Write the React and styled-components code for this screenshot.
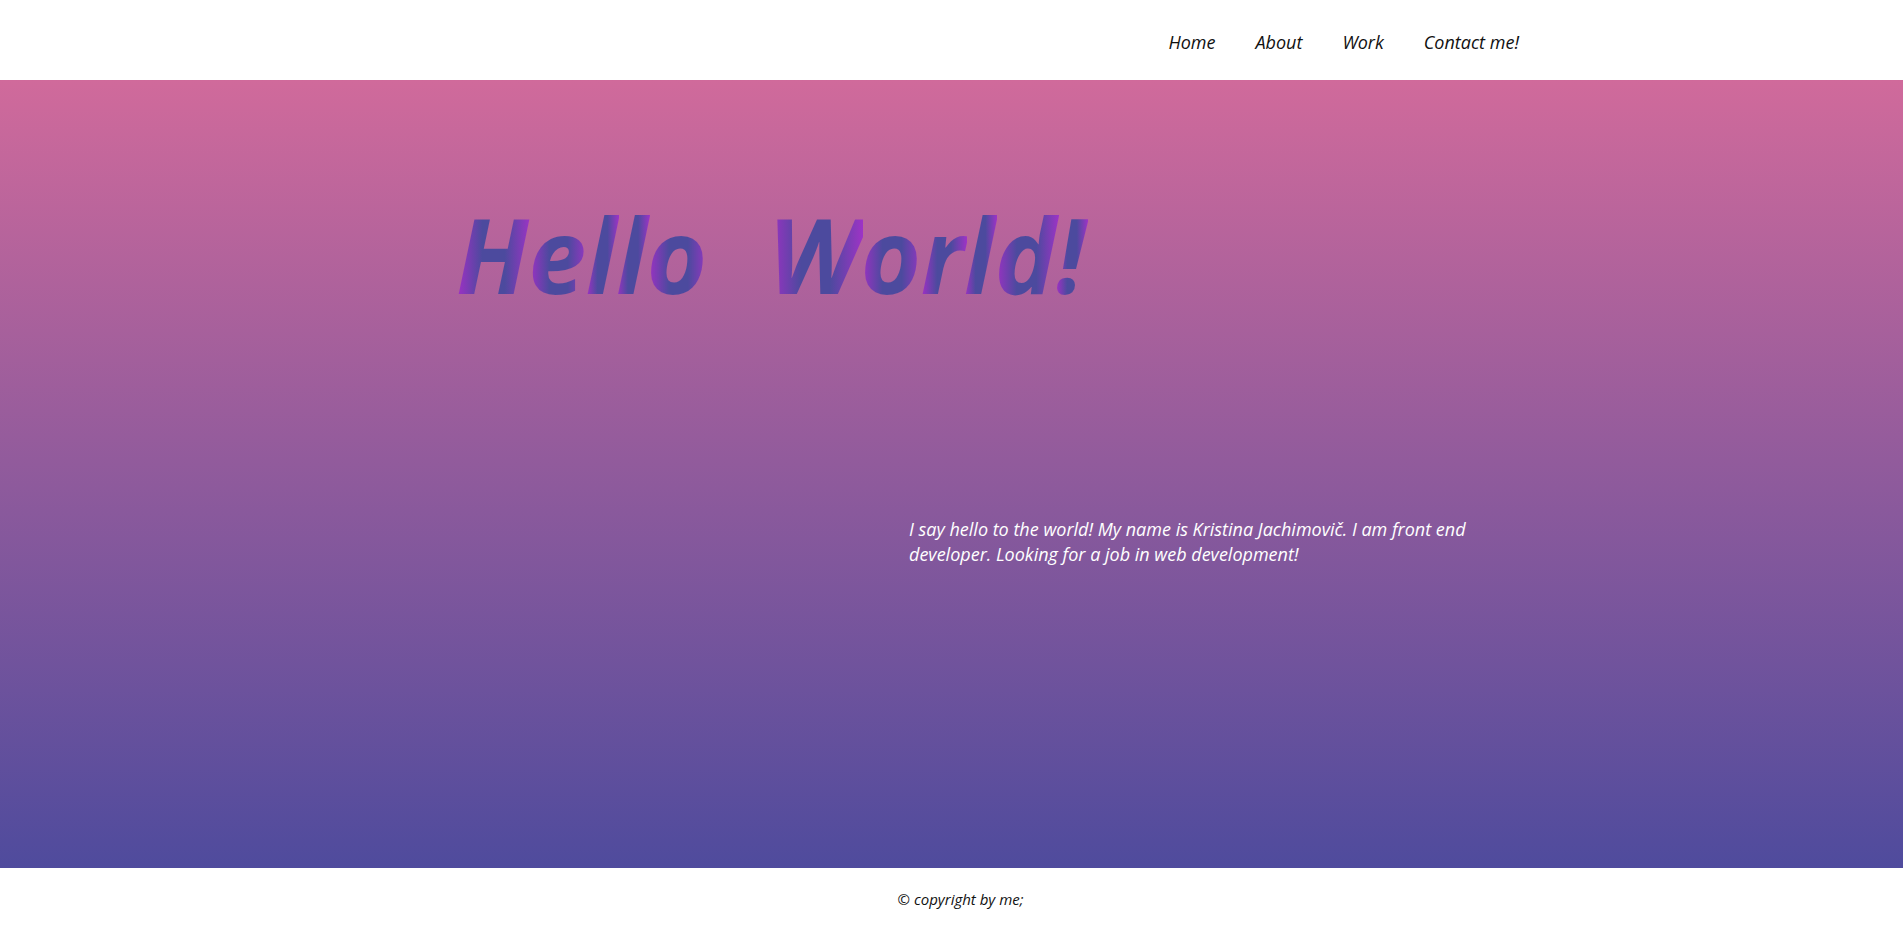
import React from "react"
import styled, { createGlobalStyle } from "styled-components"

const GlobalStyle = createGlobalStyle`
  body {
    margin: 0;
    font-family: "Open Sans", "Noto Sans", sans-serif;
    background: #ffffff;
  }
`

const Page = styled.div`
  display: flex;
  flex-direction: column;
  min-height: 929px;
`

const Header = styled.header`
  height: 80px;
  display: flex;
  justify-content: flex-end;
  align-items: center;
  padding-right: 384px;
  background: #ffffff;
`

const Nav = styled.nav`
  display: flex;
  gap: 40px;
`

const NavLink = styled.a`
  color: #111111;
  font-style: italic;
  font-size: 18px;
  text-decoration: none;
  padding-top: 4px;
`

const Hero = styled.main`
  height: 788px;
  background: linear-gradient(to bottom, #d06a9b 0%, #4f4b9d 100%);
  padding: 0 0 0 456px;
`

const Heading = styled.h1`
  margin: 114px 0 0;
  font-size: 104px;
  font-weight: 700;
  font-style: italic;
  letter-spacing: -0.5px;
  word-spacing: 4px;
  white-space: pre;
  line-height: 120px;
`

const Letter = styled.span`
  background: linear-gradient(
    to right,
    #a22fc6 0%,
    #4c4a9e 35%,
    #4c4a9e 65%,
    #9e33c6 100%
  );
  -webkit-background-clip: text;
  background-clip: text;
  color: transparent;
  padding-right: 3px;
  margin-right: -3px;
`

const Intro = styled.p`
  margin: 203px 0 0 453px;
  width: 580px;
  color: #ffffff;
  font-style: italic;
  font-size: 18px;
  line-height: 25px;
`

const Footer = styled.footer`
  height: 61px;
  display: flex;
  justify-content: center;
  align-items: center;
  font-style: italic;
  font-size: 15px;
  color: #111111;
  padding-left: 18px;
`

const links = ["Home", "About", "Work", "Contact me!"]
const title = "Hello  World!"

export default function App() {
  return (
    <Page>
      <GlobalStyle />
      <Header>
        <Nav>
          {links.map((l) => (
            <NavLink key={l} href="#">
              {l}
            </NavLink>
          ))}
        </Nav>
      </Header>
      <Hero>
        <Heading>
          {title.split("").map((ch, i) =>
            ch === " " ? " " : <Letter key={i}>{ch}</Letter>
          )}
        </Heading>
        <Intro>
          I say hello to the world! My name is Kristina Jachimovič. I am front
          end developer. Looking for a job in web development!
        </Intro>
      </Hero>
      <Footer>© copyright by me;</Footer>
    </Page>
  )
}
